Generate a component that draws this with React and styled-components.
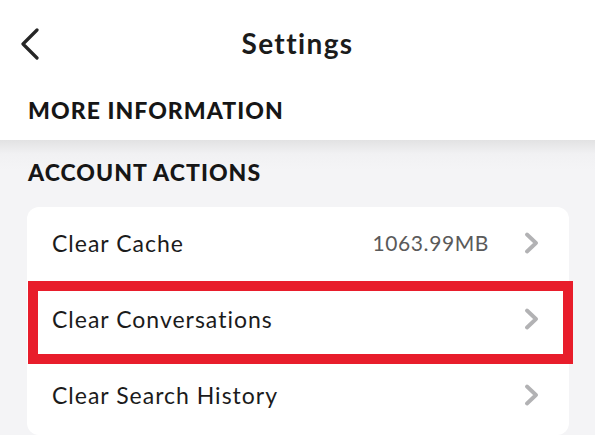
import React from 'react'
import styled, { createGlobalStyle } from 'styled-components'

const GlobalStyle = createGlobalStyle`
    html, body {
        margin: 0;
        padding: 0;
        background: #ffffff;
    }
    body {
        font-family: Lato, "Open Sans", "Liberation Sans", sans-serif;
        color: #1b1b1b;
    }
`

const Page = styled.div`
    width: 595px;
    height: 435px;
    overflow: hidden;
    display: flex;
    flex-direction: column;
`

const Header = styled.div`
    height: 88px;
    display: grid;
    grid-template-columns: 60px 1fr 60px;
    align-items: center;
`

const BackButton = styled.button`
    border: none;
    background: none;
    padding: 0 0 0 20px;
    height: 40px;
    display: flex;
    align-items: center;
    cursor: pointer;
`

const Title = styled.h1`
    margin: 0;
    padding-bottom: 3px;
    text-align: center;
    font-size: 28px;
    font-weight: 700;
    letter-spacing: 1.4px;
    color: #1b1b1b;
`

const SectionTitle = styled.h2`
    margin: 0;
    height: ${p => p.h}px;
    padding: 0 0 ${p => p.pb}px 28px;
    box-sizing: border-box;
    display: flex;
    align-items: center;
    font-size: 23px;
    font-weight: 900;
    letter-spacing: 1.05px;
    color: #161616;
`

const GraySection = styled.div`
    flex: 1;
    background: linear-gradient(#e2e2e3 0px, #f1f1f3 14px, #f4f4f6 30px);
`

const Card = styled.div`
    margin: 0 26px 0 27px;
    background: #ffffff;
    border-radius: 12px;
    display: flex;
    flex-direction: column;
`

const Row = styled.div`
    position: relative;
    height: 76px;
    box-sizing: border-box;
    padding: 0 30px 5px 25px;
    display: flex;
    align-items: center;
    gap: 35px;

    ${p => p.highlight && `
        &::after {
            content: "";
            position: absolute;
            top: -2px;
            left: 1px;
            right: -4px;
            bottom: -5px;
            border: 10px solid #e81d2b;
            pointer-events: none;
        }
    `}
`

const Label = styled.span`
    flex: 1;
    font-size: 23px;
    font-weight: 400;
    letter-spacing: 1px;
    color: #1b1b1b;
`

const Value = styled.span`
    font-size: 21px;
    letter-spacing: 0.6px;
    color: #5a5a5a;
`

const BackIcon = () => (
    <svg width="20" height="32" viewBox="0 0 20 32">
        <polyline points="17,2 3,16 17,30" fill="none" stroke="#262626" strokeWidth="3.2" strokeLinecap="round" strokeLinejoin="round" />
    </svg>
)

const Chevron = () => (
    <svg width="15" height="22" viewBox="0 0 15 22">
        <polyline points="3,2.5 12,11 3,19.5" fill="none" stroke="#b2b2b4" strokeWidth="3.8" strokeLinecap="round" strokeLinejoin="round" />
    </svg>
)

const actions = [
    { id: 1, label: 'Clear Cache', value: '1063.99MB' },
    { id: 2, label: 'Clear Conversations', highlight: true },
    { id: 3, label: 'Clear Search History' },
]

const App = () => {
    return (
        <Page>
            <GlobalStyle />
            <Header>
                <BackButton aria-label="Back">
                    <BackIcon />
                </BackButton>
                <Title>Settings</Title>
                <div />
            </Header>
            <SectionTitle h={52} pb={8}>MORE INFORMATION</SectionTitle>
            <GraySection>
                <SectionTitle h={67} pb={4}>ACCOUNT ACTIONS</SectionTitle>
                <Card>
                    {actions.map(item => (
                        <Row key={item.id} highlight={item.highlight}>
                            <Label>{item.label}</Label>
                            {item.value && <Value>{item.value}</Value>}
                            <Chevron />
                        </Row>
                    ))}
                </Card>
            </GraySection>
        </Page>
    )
}

export default App
